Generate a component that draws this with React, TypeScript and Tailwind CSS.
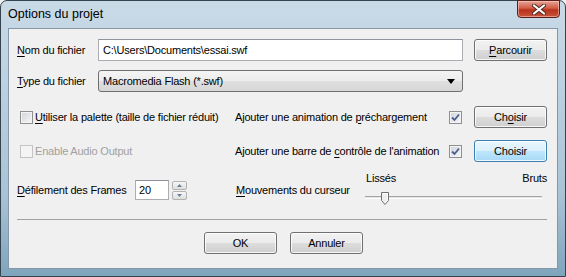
import type { ReactNode } from 'react';

const font = "font-['Liberation_Sans',Arial,sans-serif]";

function Btn({ children, focused = false }: { children: ReactNode; focused?: boolean }) {
  return (
    <button
      className={
        'w-[73px] h-[22px] rounded-[3px] border text-[11px] text-black flex items-center justify-center shadow-[inset_0_0_0_1px_rgba(255,255,255,0.8)] ' +
        (focused
          ? 'border-[#3c7fb1] bg-[linear-gradient(to_bottom,#eaf6fd_0%,#d9f0fc_50%,#bee6fd_50%,#a7d9f5_100%)]'
          : 'border-[#707070] bg-[linear-gradient(to_bottom,#f2f2f2_0%,#ebebeb_50%,#dddddd_50%,#cfcfcf_100%)]')
      }
    >
      {children}
    </button>
  );
}

function Check({ checked = false, disabled = false }: { checked?: boolean; disabled?: boolean }) {
  return (
    <span
      className={
        'w-[13px] h-[13px] shrink-0 border flex items-center justify-center ' +
        (disabled
          ? 'border-[#c4c4c4] bg-[#f4f4f4]'
          : 'border-[#8e8f8f] bg-[linear-gradient(135deg,#d0d3d8,#f7f7f7)] shadow-[inset_0_0_0_1px_#f4f4f4]')
      }
    >
      {checked && (
        <svg width="9" height="9" viewBox="0 0 9 9">
          <path d="M1 4.5 L3.5 7 L8 1.5" fill="none" stroke="#4a5f8e" strokeWidth="1.8" />
        </svg>
      )}
    </span>
  );
}

function U({ children }: { children: ReactNode }) {
  return <span className="underline underline-offset-[2px]">{children}</span>;
}

export default function App() {
  return (
    <div className={`w-[566px] h-[277px] ${font} bg-[#f0f0f0]`}>
      <div className="w-[566px] h-[277px] flex flex-col rounded-t-[7px] border border-[#35434f] bg-[linear-gradient(to_bottom,#c9dae7_0%,#bcd1e1_30%,#a9c3d6_70%,#7fa5bd_100%)]">
        {/* title bar */}
        <div className="h-[27px] flex justify-between">
          <span className="pl-[7px] pt-[5px] text-[12.5px] text-black leading-[16px]">Options du projet</span>
          <div className="w-[43px] h-[18px] mr-[5px] -mt-px rounded-b-[4px] border border-[#5a1e16] bg-[linear-gradient(to_bottom,#e5a497_0%,#d35d45_45%,#b8321c_55%,#c9543c_100%)] flex items-center justify-center shadow-[inset_0_0_0_1px_rgba(255,220,210,0.5)]">
            <svg width="14" height="11" viewBox="0 0 14 11">
              <path d="M2 1.5 L12 9.5 M12 1.5 L2 9.5" stroke="#4a2a24" strokeWidth="4" strokeLinecap="round" />
              <path d="M2 1.5 L12 9.5 M12 1.5 L2 9.5" stroke="#ffffff" strokeWidth="2.2" strokeLinecap="round" />
            </svg>
          </div>
        </div>

        {/* client area */}
        <div className="mx-[7px] h-[241px] border border-[#8596a6] bg-[#f0f0f0] text-[11px] tracking-[-0.2px] text-black pl-[8px] pr-[10px] pt-[10px] flex flex-col">
          {/* row 1 */}
          <div className="flex items-center h-[22px]">
            <span className="w-[81px]"><U>N</U>om du fichier</span>
            <div className="w-[365px] h-[22px] border border-[#abadb3] border-t-[#8e9299] bg-white flex items-center px-[4px]">
              C:\Users\Documents\essai.swf
            </div>
            <div className="ml-[11px]">
              <Btn><U>P</U>arcourir</Btn>
            </div>
          </div>

          {/* row 2 */}
          <div className="flex items-center h-[22px] mt-[9px]">
            <span className="w-[81px]"><U>T</U>ype du fichier</span>
            <div className="w-[365px] h-[22px] rounded-[3px] border border-[#707070] bg-[linear-gradient(to_bottom,#f4f4f4_0%,#ececec_50%,#e0e0e0_50%,#d6d6d6_100%)] flex items-center justify-between pl-[4px] pr-[7px]">
              <span>Macromedia Flash (*.swf)</span>
              <svg width="8" height="5" viewBox="0 0 8 5">
                <path d="M0 0 H8 L4 5 Z" fill="#000" />
              </svg>
            </div>
          </div>

          {/* row 3 */}
          <div className="flex items-center h-[22px] mt-[14px]">
            <div className="w-[218px] flex items-center pl-[3px]">
              <Check />
              <span className="ml-[2px]"><U>U</U>tiliser la palette (taille de fichier réduit)</span>
            </div>
            <span className="flex-1"><span>Ajouter une animation de </span><U>p</U>réchargement</span>
            <Check checked />
            <div className="ml-[12px]">
              <Btn>Ch<U>o</U>isir</Btn>
            </div>
          </div>

          {/* row 4 */}
          <div className="flex items-center h-[22px] mt-[12px]">
            <div className="w-[218px] flex items-center pl-[3px]">
              <Check disabled />
              <span className="ml-[2px] text-[#a0a0a0]">Enable Audio Output</span>
            </div>
            <span className="flex-1">Ajouter une barre de <U>c</U>ontrôle de l'animation</span>
            <Check checked />
            <div className="ml-[12px]">
              <Btn focused>Choisir</Btn>
            </div>
          </div>

          {/* row 5 */}
          <div className="flex h-[36px] mt-[10px]">
            <div className="w-[218px] flex items-center">
              <span className="w-[118px]"><U>D</U>éfilement des Frames</span>
              <div className="w-[34px] h-[20px] border border-[#abadb3] border-t-[#8e9299] bg-white flex items-center px-[3px]">
                20
              </div>
              <div className="ml-[3px] w-[15px] h-[19px] flex flex-col gap-px">
                <div className="h-[9px] rounded-[2px] border border-[#b2b2b2] bg-[linear-gradient(to_bottom,#f6f6f6,#dedede)] flex items-center justify-center">
                  <svg width="5" height="3" viewBox="0 0 5 3"><path d="M0 3 L2.5 0 L5 3 Z" fill="#6a7fa6" /></svg>
                </div>
                <div className="h-[9px] rounded-[2px] border border-[#b2b2b2] bg-[linear-gradient(to_bottom,#f6f6f6,#dedede)] flex items-center justify-center">
                  <svg width="5" height="3" viewBox="0 0 5 3"><path d="M0 0 L5 0 L2.5 3 Z" fill="#6a7fa6" /></svg>
                </div>
              </div>
            </div>
            <div className="flex items-center pl-[1px] w-[130px]">
              <span><U>M</U>ouvements du curseur</span>
            </div>
            <div className="flex-1 flex flex-col pt-0">
              <div className="flex justify-between h-[13px] leading-[13px] pl-px">
                <span>Lissés</span>
                <span>Bruts</span>
              </div>
              <div className="relative h-[18px] mt-px">
                <div className="absolute left-0 right-[5px] top-[10px] h-[3px] border-t border-[#a4a4a4] border-b border-b-white bg-[#e4e4e4]" />
                <svg className="absolute left-[16px] top-[6px]" width="8" height="13" viewBox="0 0 8 13">
                  <path d="M0.5 0.5 H7.5 V8.5 L4 12.5 L0.5 8.5 Z" fill="#eeeeee" stroke="#707070" />
                  <path d="M1.5 1.5 H6.5 V8 L4 11" fill="none" stroke="#ffffff" />
                </svg>
              </div>
            </div>
          </div>

          {/* separator */}
          <div className="mt-[11px] h-px bg-[#a0a0a0]" />

          {/* bottom buttons */}
          <div className="flex justify-center gap-[13px] mt-[12px] pl-[3px]">
            <Btn>OK</Btn>
            <Btn>Annuler</Btn>
          </div>
        </div>
      </div>
    </div>
  );
}
